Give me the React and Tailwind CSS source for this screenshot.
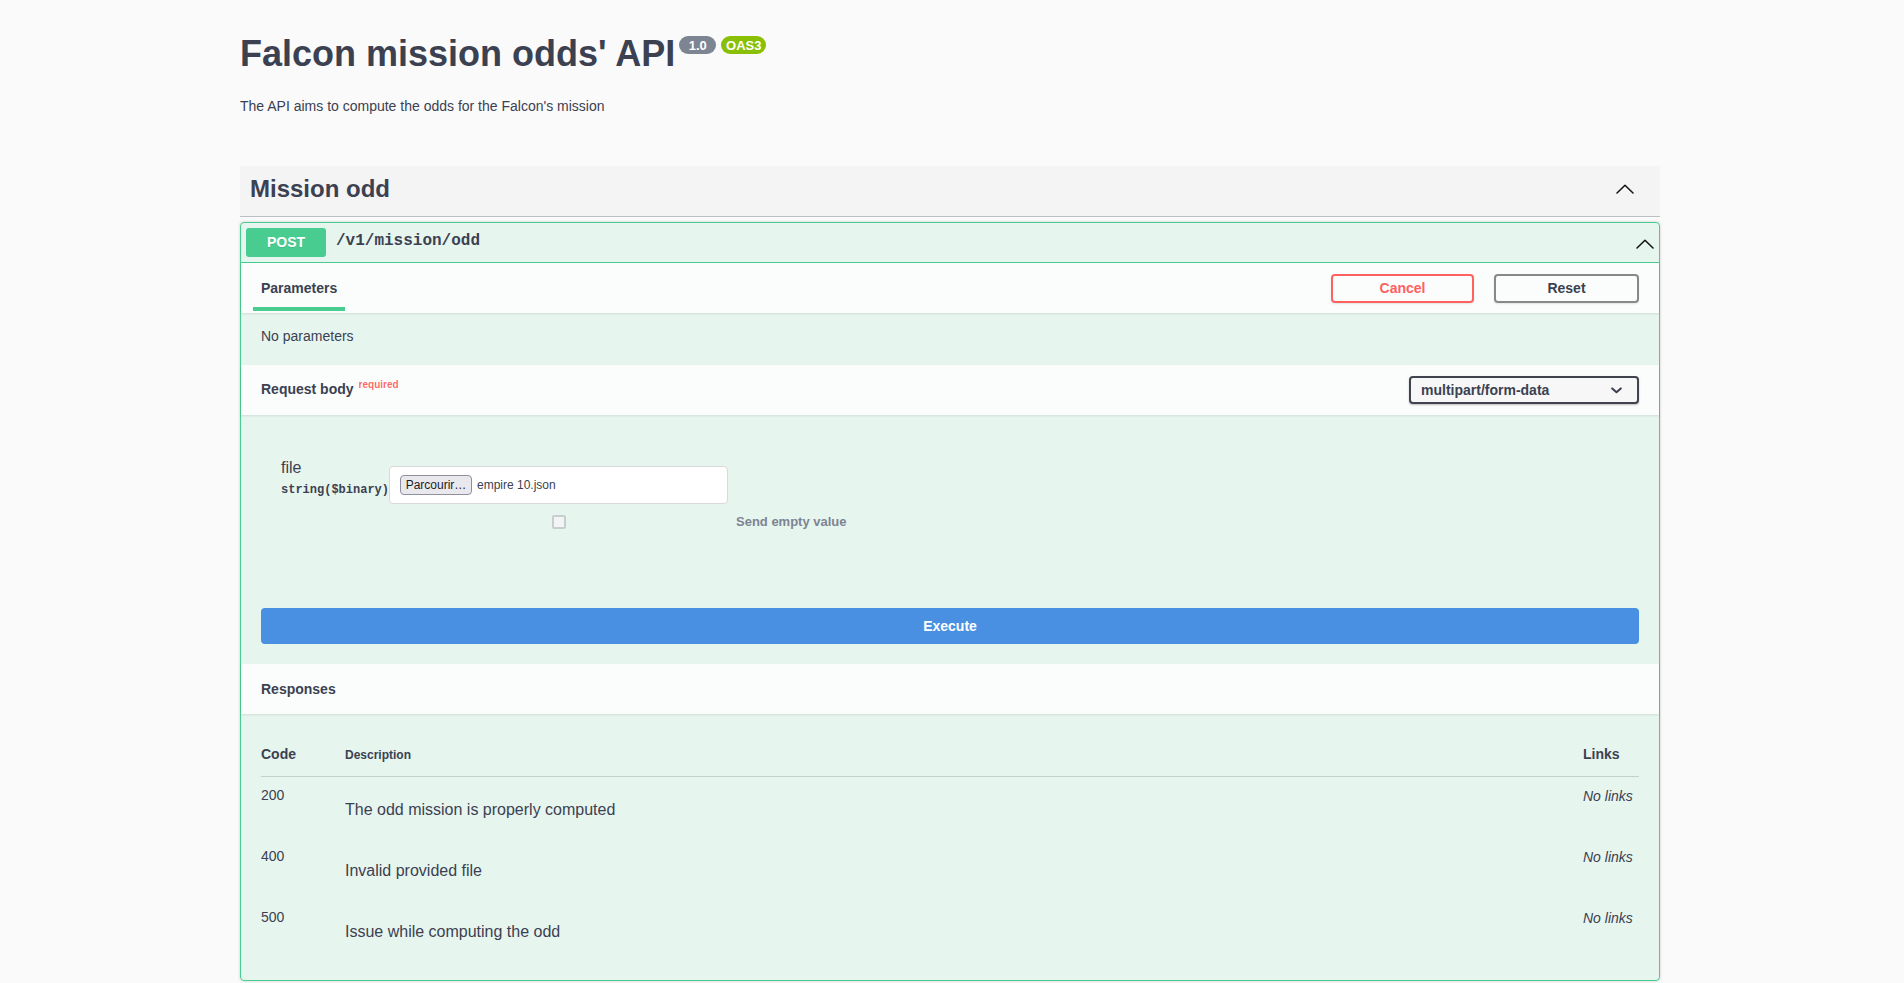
import React from "react";

function ArrowUp({ className = "" }) {
  return (
    <svg width="18" height="10" viewBox="0 0 18 10" className={className}>
      <polyline points="1,9 9,1.3 17,9" fill="none" stroke="#111" strokeWidth="1.5" strokeLinecap="round" strokeLinejoin="round" />
    </svg>
  );
}

function ChevronDown() {
  return (
    <svg width="11" height="7" viewBox="0 0 11 7">
      <polyline points="1.2,1.4 5.5,5.3 9.8,1.4" fill="none" stroke="#3b4151" strokeWidth="2" strokeLinecap="round" strokeLinejoin="round" />
    </svg>
  );
}

const responses = [
  { code: "200", desc: "The odd mission is properly computed" },
  { code: "400", desc: "Invalid provided file" },
  { code: "500", desc: "Issue while computing the odd" },
];

export default function App() {
  return (
    <div className="min-h-screen bg-[#fafafa] font-['Liberation_Sans',Arial,sans-serif] text-[#3b4151]">
      <div className="ml-[240px] w-[1420px] pt-[33px] pb-[15px]">
        {/* Info */}
        <div className="flex items-start">
          <h2 className="text-[36px] leading-[41px] font-bold text-[#3b4151]">Falcon mission odds' API</h2>
          <span className="ml-[4px] mt-[3px] flex h-[18px] w-[37px] items-center justify-center rounded-full bg-[#7d8492] text-[13px] leading-[15px] font-bold text-white">1.0</span>
          <span className="ml-[5px] mt-[3px] flex h-[18px] w-[45px] items-center justify-center rounded-full bg-[#89bf04] text-[13px] leading-[15px] font-bold text-white">OAS3</span>
        </div>
        <p className="mt-[24px] text-[14px] leading-[17px]">The API aims to compute the odds for the Falcon's mission</p>

        {/* Tag */}
        <div className="mt-[51px] flex h-[51px] items-start justify-between border-b border-[rgba(59,65,81,0.3)] bg-[#f4f4f4] pl-[10px]">
          <h3 className="pt-[9px] text-[24px] leading-[28px] font-bold">Mission odd</h3>
          <ArrowUp className="mt-[18px] mr-[26px]" />
        </div>

        {/* Operation block */}
        <div className="mt-[5px] rounded-[4px] border border-[#49cc90] bg-[rgba(73,204,144,0.1)] shadow-[0_0_3px_rgba(0,0,0,0.19)]">
          {/* Summary */}
          <div className="flex items-center border-b border-[#49cc90] p-[5px]">
            <span className="flex h-[29px] w-[80px] items-center justify-center rounded-[3px] bg-[#49cc90] text-[14px] font-bold text-white [text-shadow:0_1px_0_rgba(0,0,0,0.1)]">POST</span>
            <span className="mb-[3px] flex-1 px-[10px] font-['Liberation_Mono',monospace] text-[16px] font-bold leading-[18px]">/v1/mission/odd</span>
            <ArrowUp className="mt-[3px]" />
          </div>

          {/* Parameters header */}
          <div className="flex h-[50px] items-center justify-between bg-[rgba(255,255,255,0.8)] px-5 shadow-[0_1px_2px_rgba(0,0,0,0.1)]">
            <div className="relative">
              <h4 className="text-[14px] leading-[16px] font-bold">Parameters</h4>
              <span className="absolute top-[27px] left-[-10%] h-[4px] w-[120%] bg-[#49cc90]"></span>
            </div>
            <div className="flex gap-5">
              <button className="h-[29px] w-[143px] rounded-[4px] border-2 border-[#ff6060] text-[14px] font-bold text-[#ff6060] shadow-[0_1px_2px_rgba(0,0,0,0.1)]">Cancel</button>
              <button className="h-[29px] w-[145px] rounded-[4px] border-2 border-[#888888] text-[14px] font-bold text-[#3b4151] shadow-[0_1px_2px_rgba(0,0,0,0.1)]">Reset</button>
            </div>
          </div>
          <div className="h-[52px] px-5 pt-[15px]">
            <p className="text-[14px] leading-[16px]">No parameters</p>
          </div>

          {/* Request body header */}
          <div className="flex h-[50px] items-center justify-between bg-[rgba(255,255,255,0.8)] px-5 shadow-[0_1px_2px_rgba(0,0,0,0.1)]">
            <h4 className="mt-[-1px] text-[14px] leading-[16px] font-bold">
              Request body
              <span className="relative top-[-6px] pl-[5px] text-[10px] font-bold text-[rgba(255,0,0,0.6)]">required</span>
            </h4>
            <div className="flex h-[28px] w-[230px] items-center justify-between rounded-[4px] border-2 border-[#41444e] bg-[#f7f7f7] pr-[15px] pl-[10px] text-[14px] font-bold shadow-[0_1px_2px_rgba(0,0,0,0.25)]">
              <span>multipart/form-data</span>
              <ChevronDown />
            </div>
          </div>

          {/* Request body content */}
          <div className="h-[173px] px-5 pt-[44px]">
            <div className="flex items-start pl-5">
              <div className="w-[108px]">
                <div className="text-[16px] leading-[18px]">file</div>
                <div className="mt-[6px] font-['Liberation_Mono',monospace] text-[12px] leading-[14px] font-bold">string($binary)</div>
              </div>
              <div className="mt-[7px]">
                <div className="flex h-[38px] w-[339px] items-center rounded-[4px] border border-[#d9d9d9] bg-white px-[10px]">
                  <span className="flex h-[20px] w-[72px] items-center justify-center rounded-[4px] border border-[#8f8f9d] bg-[#e9e9ed] text-[12px] text-[#1b1b1f]">Parcourir…</span>
                  <span className="ml-[5px] text-[12px] text-[#3b4151]">empire 10.json</span>
                </div>
                <div className="mt-[10px] flex items-center">
                  <div className="flex w-[339px] justify-center">
                    <span className="block h-[14px] w-[14px] rounded-[2px] border-2 border-[#c9cdd0] bg-[#f1f5f3]"></span>
                  </div>
                  <span className="ml-[8px] text-[13px] leading-[15px] font-bold text-[#7d8492]">Send empty value</span>
                </div>
              </div>
            </div>
          </div>

          {/* Execute */}
          <div className="p-5">
            <button className="h-[36px] w-full rounded-[4px] bg-[#4990e2] text-[14px] font-bold text-white">Execute</button>
          </div>

          {/* Responses header */}
          <div className="flex h-[50px] items-center bg-[rgba(255,255,255,0.8)] px-5 shadow-[0_1px_2px_rgba(0,0,0,0.1)]">
            <h4 className="text-[14px] leading-[16px] font-bold">Responses</h4>
          </div>

          <div className="px-5 pt-5 pb-5">
            <div className="flex items-baseline border-b border-[rgba(59,65,81,0.2)] pt-[12px] pb-[13px]">
              <div className="w-[84px] text-[14px] leading-[16px] font-bold">Code</div>
              <div className="flex-1 text-[12px] leading-[16px] font-bold">Description</div>
              <div className="w-[56px] text-[14px] leading-[16px] font-bold">Links</div>
            </div>
            {responses.map((r) => (
              <div key={r.code} className="flex h-[61px] items-start">
                <div className="w-[84px] pt-[10px] text-[14px] leading-[16px]">{r.code}</div>
                <div className="flex-1 pt-[24px] text-[16px] leading-[18px]">{r.desc}</div>
                <div className="w-[56px] pt-[11px] text-[14px] leading-[16px] italic">No links</div>
              </div>
            ))}
          </div>
        </div>
      </div>
    </div>
  );
}
